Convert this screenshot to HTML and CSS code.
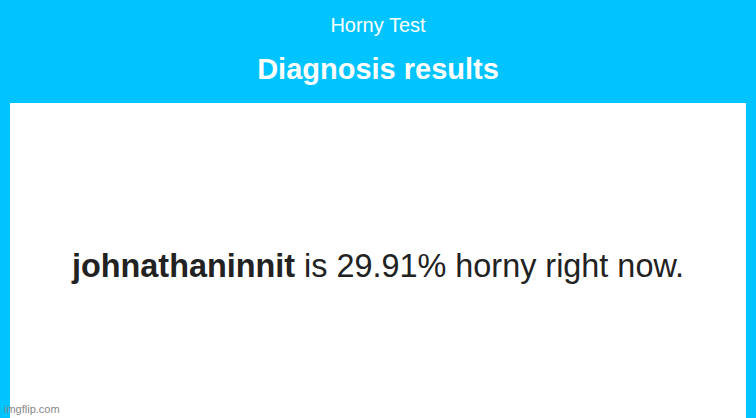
FILE: index.html
```html
<!DOCTYPE html>
<html lang="en">
<head>
    <meta charset="UTF-8">
    <title>Horny Test</title>
    <link rel="stylesheet" href="styles.css">
</head>
<body>

<header>
    <p class="site-name">Horny Test</p>
    <h1>Diagnosis results</h1>
</header>

<div class="result">
    <p><strong>johnathaninnit</strong> is 29.91% horny right now.</p>
</div>

<span class="watermark">imgflip.com</span>

</body>
</html>
```

FILE: styles.css
```css
body {
    font-family: "Liberation Sans", Arial, sans-serif;
    background-color: #00c4ff;
    margin: 0;
    padding: 0;
    height: 418px;
    overflow: hidden;
    display: flex;
    flex-direction: column;
}

header {
    color: white;
    text-align: center;
    padding-top: 13px;
    height: 90px;
    box-sizing: border-box;
}

.site-name {
    margin: 0;
    font-size: 20px;
    line-height: 24px;
}

h1 {
    margin: 15px 0 0;
    font-size: 29px;
    line-height: 34px;
}

.result {
    flex: 1;
    background-color: white;
    margin: 13px 10px 0;
    display: flex;
    align-items: center;
    justify-content: center;
    padding-top: 12px;
}

.result p {
    margin: 0;
    font-size: 32.4px;
    color: #222;
}

.watermark {
    position: absolute;
    left: 4px;
    bottom: 3px;
    font-size: 11px;
    color: #888;
}
```
